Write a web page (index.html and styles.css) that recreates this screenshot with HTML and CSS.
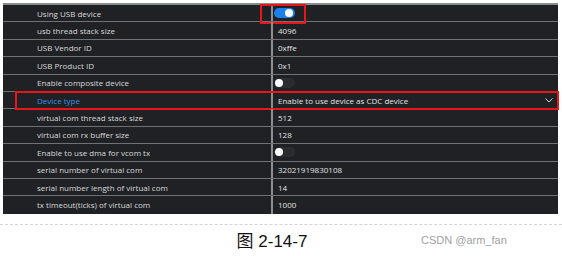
FILE: index.html
```html
<!DOCTYPE html>
<html lang="en">
<head>
  <meta charset="UTF-8" />
  <title>USB device settings</title>
  <link rel="stylesheet" href="styles.css">
</head>
<body>
  <div class="panel">
    <div class="row">
      <div class="label">Using USB device</div>
      <div class="value"><span class="switch on"><span class="knob"></span></span></div>
      <span class="mark mark-switch"></span>
    </div>
    <div class="row">
      <div class="label">usb thread stack size</div>
      <div class="value">4096</div>
    </div>
    <div class="row">
      <div class="label">USB Vendor ID</div>
      <div class="value">0xffe</div>
    </div>
    <div class="row">
      <div class="label">USB Product ID</div>
      <div class="value">0x1</div>
    </div>
    <div class="row">
      <div class="label">Enable composite device</div>
      <div class="value"><span class="switch"><span class="knob"></span></span></div>
    </div>
    <div class="row">
      <div class="label link">Device type</div>
      <div class="value select">
        <span>Enable to use device as CDC device</span>
        <svg class="chevron" width="8" height="5" viewBox="0 0 8 5"><path d="M0.5 0.5 L4 4 L7.5 0.5" fill="none" stroke="#d8d8d8" stroke-width="1"/></svg>
      </div>
      <span class="mark mark-row"></span>
    </div>
    <div class="row">
      <div class="label">virtual com thread stack size</div>
      <div class="value">512</div>
    </div>
    <div class="row">
      <div class="label">virtual com rx buffer size</div>
      <div class="value">128</div>
    </div>
    <div class="row">
      <div class="label">Enable to use dma for vcom tx</div>
      <div class="value"><span class="switch"><span class="knob"></span></span></div>
    </div>
    <div class="row">
      <div class="label">serial number of virtual com</div>
      <div class="value">32021919830108</div>
    </div>
    <div class="row">
      <div class="label">serial number length of virtual com</div>
      <div class="value">14</div>
    </div>
    <div class="row last">
      <div class="label">tx timeout(ticks) of virtual com</div>
      <div class="value">1000</div>
    </div>
  </div>

  <div class="divider"></div>

  <div class="caption">
    <span class="title">图 2-14-7</span>
    <span class="credit">CSDN @arm_fan</span>
  </div>
</body>
</html>
```

FILE: styles.css
```css
* {
  box-sizing: border-box;
}

body {
  margin: 0;
  background: #ffffff;
  font-family: "Open Sans", "Noto Sans", sans-serif;
}

.panel {
  margin: 3px 4px 0 3px;
  background: #1f2124;
  border-top: 2px solid #8a8b8d;
}

.row {
  position: relative;
  display: grid;
  grid-template-columns: 268px 1fr;
  height: 17.4px;
  border-bottom: 1.5px solid #6f7174;
  font-size: 8px;
  color: #e2e2e2;
}

.row.last {
  border-bottom: none;
}

.label {
  padding-left: 34px;
  display: flex;
  align-items: center;
  color: #dadada;
}

.label.link {
  color: #3a8ee6;
}

.value {
  border-left: 2px solid #8d8e90;
  padding-left: 5px;
  display: flex;
  align-items: center;
}

.value.select {
  justify-content: space-between;
  padding-right: 5px;
}

.switch {
  width: 21px;
  height: 10px;
  border-radius: 5px;
  background: #2a2c30;
  display: flex;
  align-items: center;
  padding: 0 1px;
  margin-left: -4px;
}

.switch.on {
  background: #1d7fe9;
  justify-content: flex-end;
  padding: 0 2px;
}

.knob {
  width: 8px;
  height: 8px;
  border-radius: 50%;
  background: #ffffff;
}

.mark {
  position: absolute;
  border: 2px solid #e8161b;
  pointer-events: none;
}

.mark-switch {
  left: 257px;
  top: -1px;
  width: 46px;
  height: 20px;
}

.mark-row {
  left: 12px;
  right: -1px;
  top: -1px;
  height: 19px;
}

.divider {
  margin-top: 10px;
  border-top: 1px dashed #d4d4d4;
}

.caption {
  position: relative;
  height: 30px;
  text-align: center;
}

.title {
  display: inline-block;
  margin-top: 8px;
  font-family: "Liberation Sans", "Noto Sans CJK SC", sans-serif;
  font-size: 17px;
  line-height: 18px;
  color: #111111;
  margin-right: 18px;
}

.credit {
  position: absolute;
  left: 421px;
  top: 9px;
  font-family: "Liberation Sans", sans-serif;
  font-size: 11px;
  line-height: 12px;
  color: #a0a0a0;
}
```
